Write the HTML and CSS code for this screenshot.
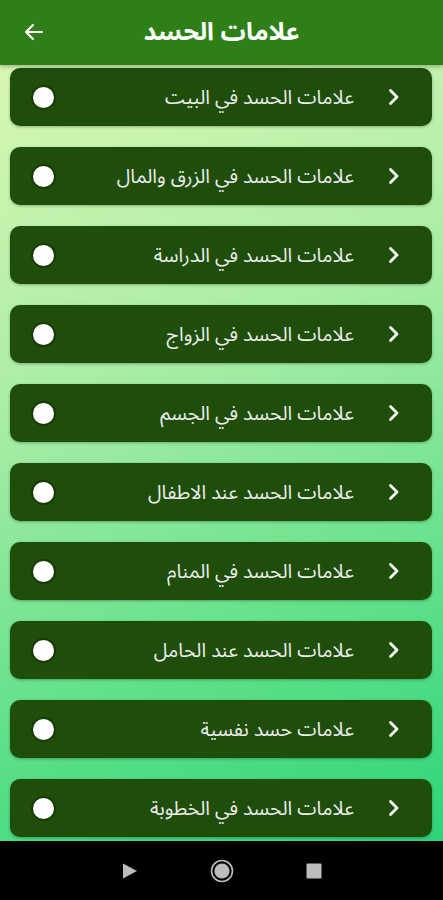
FILE: index.html
```html
<!DOCTYPE html>
<html lang="ar" dir="rtl">
<head>
    <meta charset="UTF-8">
    <meta name="viewport" content="width=device-width, initial-scale=1.0">
    <title>علامات الحسد</title>
    <link rel="stylesheet" href="styles.css">
</head>
<body>
    <div class="screen">
        <header class="topbar">
            <h1 class="title">علامات الحسد</h1>
            <button class="back" aria-label="رجوع">
                <svg width="24" height="24" viewBox="0 0 24 24">
                    <path d="M20 12H5M11 5l-7 7 7 7" fill="none" stroke="#fff" stroke-width="2.2" stroke-linecap="round" stroke-linejoin="round"/>
                </svg>
            </button>
        </header>

        <main class="list">
            <div class="item">
                <span class="chev"><svg width="16" height="20" viewBox="0 0 16 20"><path d="M4.5 3.5l6.5 6.5-6.5 6.5" fill="none" stroke="#fff" stroke-width="2.8" stroke-linecap="round" stroke-linejoin="round"/></svg></span>
                <span class="label">علامات الحسد في البيت</span>
                <span class="dot"></span>
            </div>
            <div class="item">
                <span class="chev"><svg width="16" height="20" viewBox="0 0 16 20"><path d="M4.5 3.5l6.5 6.5-6.5 6.5" fill="none" stroke="#fff" stroke-width="2.8" stroke-linecap="round" stroke-linejoin="round"/></svg></span>
                <span class="label">علامات الحسد في الزرق والمال</span>
                <span class="dot"></span>
            </div>
            <div class="item">
                <span class="chev"><svg width="16" height="20" viewBox="0 0 16 20"><path d="M4.5 3.5l6.5 6.5-6.5 6.5" fill="none" stroke="#fff" stroke-width="2.8" stroke-linecap="round" stroke-linejoin="round"/></svg></span>
                <span class="label">علامات الحسد في الدراسة</span>
                <span class="dot"></span>
            </div>
            <div class="item">
                <span class="chev"><svg width="16" height="20" viewBox="0 0 16 20"><path d="M4.5 3.5l6.5 6.5-6.5 6.5" fill="none" stroke="#fff" stroke-width="2.8" stroke-linecap="round" stroke-linejoin="round"/></svg></span>
                <span class="label">علامات الحسد في الزواج</span>
                <span class="dot"></span>
            </div>
            <div class="item">
                <span class="chev"><svg width="16" height="20" viewBox="0 0 16 20"><path d="M4.5 3.5l6.5 6.5-6.5 6.5" fill="none" stroke="#fff" stroke-width="2.8" stroke-linecap="round" stroke-linejoin="round"/></svg></span>
                <span class="label">علامات الحسد في الجسم</span>
                <span class="dot"></span>
            </div>
            <div class="item">
                <span class="chev"><svg width="16" height="20" viewBox="0 0 16 20"><path d="M4.5 3.5l6.5 6.5-6.5 6.5" fill="none" stroke="#fff" stroke-width="2.8" stroke-linecap="round" stroke-linejoin="round"/></svg></span>
                <span class="label">علامات الحسد عند الاطفال</span>
                <span class="dot"></span>
            </div>
            <div class="item">
                <span class="chev"><svg width="16" height="20" viewBox="0 0 16 20"><path d="M4.5 3.5l6.5 6.5-6.5 6.5" fill="none" stroke="#fff" stroke-width="2.8" stroke-linecap="round" stroke-linejoin="round"/></svg></span>
                <span class="label">علامات الحسد في المنام</span>
                <span class="dot"></span>
            </div>
            <div class="item">
                <span class="chev"><svg width="16" height="20" viewBox="0 0 16 20"><path d="M4.5 3.5l6.5 6.5-6.5 6.5" fill="none" stroke="#fff" stroke-width="2.8" stroke-linecap="round" stroke-linejoin="round"/></svg></span>
                <span class="label">علامات الحسد عند الحامل</span>
                <span class="dot"></span>
            </div>
            <div class="item">
                <span class="chev"><svg width="16" height="20" viewBox="0 0 16 20"><path d="M4.5 3.5l6.5 6.5-6.5 6.5" fill="none" stroke="#fff" stroke-width="2.8" stroke-linecap="round" stroke-linejoin="round"/></svg></span>
                <span class="label">علامات حسد نفسية</span>
                <span class="dot"></span>
            </div>
            <div class="item">
                <span class="chev"><svg width="16" height="20" viewBox="0 0 16 20"><path d="M4.5 3.5l6.5 6.5-6.5 6.5" fill="none" stroke="#fff" stroke-width="2.8" stroke-linecap="round" stroke-linejoin="round"/></svg></span>
                <span class="label">علامات الحسد في الخطوبة</span>
                <span class="dot"></span>
            </div>
        </main>

        <nav class="navbar">
            <svg width="16" height="18" viewBox="0 0 16 18"><path d="M1 1.5L15 9 1 16.5z" fill="#bdbdbd"/></svg>
            <svg width="24" height="24" viewBox="0 0 24 24"><circle cx="12" cy="12" r="10.5" fill="none" stroke="#bdbdbd" stroke-width="1.6"/><circle cx="12" cy="12" r="7.6" fill="#bdbdbd"/></svg>
            <svg width="16" height="16" viewBox="0 0 16 16"><rect x="0.5" y="0.5" width="15" height="15" rx="1" fill="#bdbdbd"/></svg>
        </nav>
    </div>
</body>
</html>
```

FILE: styles.css
```css
body {
    margin: 0;
    padding: 0;
    font-family: "Noto Sans Arabic", "DejaVu Sans", sans-serif;
}
.screen {
    width: 443px;
    height: 900px;
    display: flex;
    flex-direction: column;
    overflow: hidden;
    background: linear-gradient(160deg, #e2f9b8 0%, #a8eda4 40%, #5fe08a 70%, #22d274 100%);
}
.topbar {
    height: 65px;
    flex-shrink: 0;
    background-color: #2f7f18;
    display: flex;
    align-items: center;
    justify-content: center;
    position: relative;
    box-shadow: 0 2px 4px rgba(0,0,0,0.25);
    z-index: 1;
}
.title {
    margin: 0 0 2px 0;
    color: #fff;
    font-size: 25px;
    font-weight: bold;
}
.back {
    position: absolute;
    left: 22px;
    top: 20px;
    padding: 0;
    background: none;
    border: none;
    width: 24px;
    height: 24px;
}
.list {
    flex: 1;
    overflow: hidden;
    padding: 3px 11px 0 10px;
    display: flex;
    flex-direction: column;
    gap: 21px;
}
.item {
    height: 58px;
    flex-shrink: 0;
    background-color: #1f4e0a;
    border-radius: 10px;
    box-shadow: 0 1px 3px rgba(0,0,0,0.3);
    display: flex;
    align-items: center;
    padding: 0 30px 0 21px;
}
.chev {
    width: 16px;
    height: 20px;
    display: flex;
}
.label {
    flex: 1;
    color: #ececec;
    font-size: 19.5px;
    margin-right: 32px;
    text-align: right;
}
.dot {
    width: 25px;
    height: 25px;
    border-radius: 50%;
    background-color: #fff;
    border: 2px solid #173a06;
    box-sizing: border-box;
}
.navbar {
    height: 59px;
    flex-shrink: 0;
    background-color: #000;
    display: flex;
    align-items: center;
    justify-content: center;
    direction: ltr;
    gap: 72px;
}
```
